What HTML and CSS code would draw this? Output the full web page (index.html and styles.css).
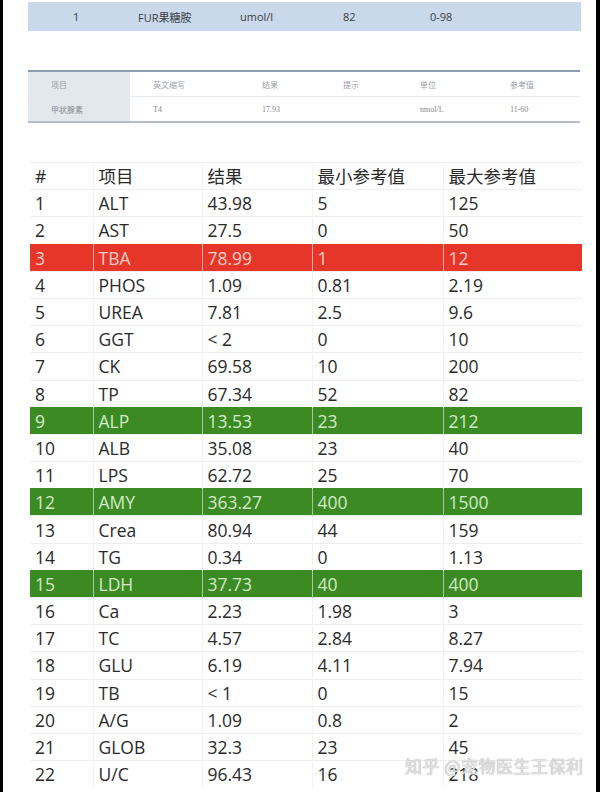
FILE: index.html
```html
<!DOCTYPE html>
<html lang="zh">
<head>
<meta charset="utf-8">
<link rel="stylesheet" href="styles.css">
</head>
<body>
<div class="page">
  <div class="bar">
    <span>1</span><span>FUR果糖胺</span><span>umol/l</span><span>82</span><span>0-98</span>
  </div>

  <table class="mini">
    <tr class="mini-head"><td class="k">项目</td><td>英文缩写</td><td>结果</td><td>提示</td><td>单位</td><td>参考值</td></tr>
    <tr><td class="k">甲状腺素</td><td>T4</td><td>17.93</td><td></td><td>nmol/L</td><td>11-60</td></tr>
  </table>

  <table class="main">
    <colgroup><col class="c1"><col class="c2"><col class="c3"><col class="c4"><col class="c5"></colgroup>
    <tr><td>#</td><td>项目</td><td>结果</td><td>最小参考值</td><td>最大参考值</td></tr>
    <tr><td>1</td><td>ALT</td><td>43.98</td><td>5</td><td>125</td></tr>
    <tr><td>2</td><td>AST</td><td>27.5</td><td>0</td><td>50</td></tr>
    <tr class="red"><td>3</td><td>TBA</td><td>78.99</td><td>1</td><td>12</td></tr>
    <tr><td>4</td><td>PHOS</td><td>1.09</td><td>0.81</td><td>2.19</td></tr>
    <tr><td>5</td><td>UREA</td><td>7.81</td><td>2.5</td><td>9.6</td></tr>
    <tr><td>6</td><td>GGT</td><td>&lt; 2</td><td>0</td><td>10</td></tr>
    <tr><td>7</td><td>CK</td><td>69.58</td><td>10</td><td>200</td></tr>
    <tr><td>8</td><td>TP</td><td>67.34</td><td>52</td><td>82</td></tr>
    <tr class="green"><td>9</td><td>ALP</td><td>13.53</td><td>23</td><td>212</td></tr>
    <tr><td>10</td><td>ALB</td><td>35.08</td><td>23</td><td>40</td></tr>
    <tr><td>11</td><td>LPS</td><td>62.72</td><td>25</td><td>70</td></tr>
    <tr class="green"><td>12</td><td>AMY</td><td>363.27</td><td>400</td><td>1500</td></tr>
    <tr><td>13</td><td>Crea</td><td>80.94</td><td>44</td><td>159</td></tr>
    <tr><td>14</td><td>TG</td><td>0.34</td><td>0</td><td>1.13</td></tr>
    <tr class="green"><td>15</td><td>LDH</td><td>37.73</td><td>40</td><td>400</td></tr>
    <tr><td>16</td><td>Ca</td><td>2.23</td><td>1.98</td><td>3</td></tr>
    <tr><td>17</td><td>TC</td><td>4.57</td><td>2.84</td><td>8.27</td></tr>
    <tr><td>18</td><td>GLU</td><td>6.19</td><td>4.11</td><td>7.94</td></tr>
    <tr><td>19</td><td>TB</td><td>&lt; 1</td><td>0</td><td>15</td></tr>
    <tr><td>20</td><td>A/G</td><td>1.09</td><td>0.8</td><td>2</td></tr>
    <tr><td>21</td><td>GLOB</td><td>32.3</td><td>23</td><td>45</td></tr>
    <tr><td>22</td><td>U/C</td><td>96.43</td><td>16</td><td>218</td></tr>
  </table>

  <div class="watermark">知乎 @宠物医生王保利</div>
</div>
</body>
</html>
```

FILE: styles.css
```css
html, body {
  margin: 0;
  padding: 0;
  background: #000;
}
.page {
  position: relative;
  margin: 0 4px 0 3px;
  height: 792px;
  overflow: hidden;
  background: #fff;
  padding-top: 2px;
  box-sizing: border-box;
  font-family: "Open Sans", "Noto Sans CJK SC", sans-serif;
}
.bar {
  margin: 0 15px 0 25px;
  height: 29px;
  background: #c9d8ea;
  display: grid;
  grid-template-columns: 65px 102px 103px 87px 1fr;
  align-items: center;
  padding-left: 45px;
  font-size: 11px;
  color: #3a3f47;
}
.mini {
  margin: 39px 0 0 25px;
  width: 552px;
  border-collapse: collapse;
  border-top: 2px solid #8d9db1;
  border-bottom: 2px solid #b5bfcb;
  font-family: "Liberation Serif", "Noto Sans CJK SC", serif;
  font-size: 8px;
  color: #85888c;
  table-layout: fixed;
}
.mini td {
  height: 24px;
  padding: 0 0 0 23px;
  white-space: nowrap;
}
.mini td:nth-child(1) { width: 79px; }
.mini td:nth-child(2) { width: 86px; }
.mini td:nth-child(3) { width: 58px; }
.mini td:nth-child(4) { width: 54px; }
.mini td:nth-child(5) { width: 67px; }
.mini .mini-head td { border-bottom: 1px solid #e6e9ee; color: #9aa0a8; }
.mini td.k { background: #e3e8ef; }

.main {
  margin: 39px 0 0 27px;
  width: 552px;
  border-collapse: collapse;
  table-layout: fixed;
  font-size: 17.5px;
  color: #2a2a2a;
}
.main col.c1 { width: 63px; }
.main col.c2 { width: 109px; }
.main col.c3 { width: 110px; }
.main col.c4 { width: 131px; }
.main col.c5 { width: 139px; }
.main tr { height: 27.2px; }
.main td {
  padding: 0 0 0 5px;
  line-height: 26px;
  border-top: 1px solid #eeeeee;
  border-left: 1px solid #f2f2f2;
  white-space: nowrap;
}
.main td:first-child { border-left: none; }
.main tr.red td {
  background: #e6362a;
  color: #f7cdc6;
  border-left-color: rgba(255,255,255,0.55);
  border-top-color: #e6362a;
}
.main tr.green td {
  background: #3b8a24;
  color: #d2eac8;
  border-left-color: rgba(255,255,255,0.55);
  border-top-color: #3b8a24;
}
.main tr.red td:first-child, .main tr.green td:first-child { border-left: none; }

.watermark {
  position: absolute;
  left: 402px;
  top: 753px;
  font-family: "Noto Sans CJK SC", sans-serif;
  font-size: 17px;
  color: rgba(240, 240, 240, 0.8);
  text-shadow: 0 0 1px #aaa, 0 0 1px #bbb;
  letter-spacing: 0.5px;
}
```
